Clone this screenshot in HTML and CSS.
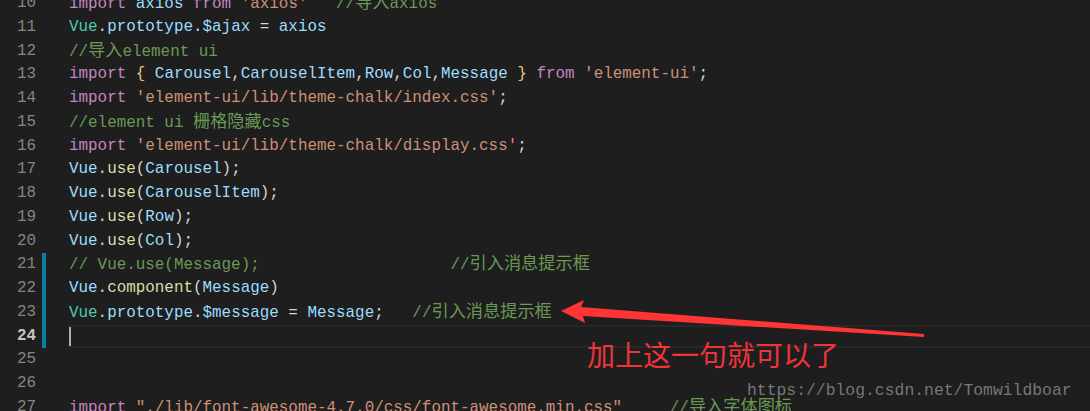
FILE: index.html
```html
<!DOCTYPE html>
<html lang="zh-CN">

<head>
  <meta charset="UTF-8">
  <title>main.js</title>
  <link rel="stylesheet" href="styles.css">
</head>

<body>
  <div class="editor">
    <div class="line"><span class="ln">10</span><span class="mark"></span><span class="code"><span class="kw">import</span> <span class="var">axios</span> <span class="kw">from</span> <span class="str">'axios'</span>   <span class="cm">//<span class="zh">导入</span>axios</span></span></div>
    <div class="line"><span class="ln">11</span><span class="mark"></span><span class="code"><span class="cls">Vue</span>.<span class="var">prototype</span>.<span class="var">$ajax</span> = <span class="var">axios</span></span></div>
    <div class="line"><span class="ln">12</span><span class="mark"></span><span class="code"><span class="cm">//<span class="zh">导入</span>element ui</span></span></div>
    <div class="line"><span class="ln">13</span><span class="mark"></span><span class="code"><span class="kw">import</span> <span class="br">{</span> <span class="var">Carousel</span>,<span class="var">CarouselItem</span>,<span class="var">Row</span>,<span class="var">Col</span>,<span class="var">Message</span> <span class="br">}</span> <span class="kw">from</span> <span class="str">'element-ui'</span>;</span></div>
    <div class="line"><span class="ln">14</span><span class="mark"></span><span class="code"><span class="kw">import</span> <span class="str">'element-ui/lib/theme-chalk/index.css'</span>;</span></div>
    <div class="line"><span class="ln">15</span><span class="mark"></span><span class="code"><span class="cm">//element ui <span class="zh">栅格隐藏</span>css</span></span></div>
    <div class="line"><span class="ln">16</span><span class="mark"></span><span class="code"><span class="kw">import</span> <span class="str">'element-ui/lib/theme-chalk/display.css'</span>;</span></div>
    <div class="line"><span class="ln">17</span><span class="mark"></span><span class="code"><span class="var">Vue</span>.<span class="fn">use</span>(<span class="var">Carousel</span>);</span></div>
    <div class="line"><span class="ln">18</span><span class="mark"></span><span class="code"><span class="var">Vue</span>.<span class="fn">use</span>(<span class="var">CarouselItem</span>);</span></div>
    <div class="line"><span class="ln">19</span><span class="mark"></span><span class="code"><span class="var">Vue</span>.<span class="fn">use</span>(<span class="var">Row</span>);</span></div>
    <div class="line"><span class="ln">20</span><span class="mark"></span><span class="code"><span class="var">Vue</span>.<span class="fn">use</span>(<span class="var">Col</span>);</span></div>
    <div class="line"><span class="ln">21</span><span class="mark on"></span><span class="code"><span class="cm">// Vue.use(Message);                    //<span class="zh">引入消息提示框</span></span></span></div>
    <div class="line"><span class="ln">22</span><span class="mark on"></span><span class="code"><span class="var">Vue</span>.<span class="fn">component</span>(<span class="var">Message</span>)</span></div>
    <div class="line"><span class="ln">23</span><span class="mark on"></span><span class="code"><span class="cls">Vue</span>.<span class="var">prototype</span>.<span class="var">$message</span> = <span class="var">Message</span>;   <span class="cm">//<span class="zh">引入消息提示框</span></span></span></div>
    <div class="line active"><span class="ln">24</span><span class="mark on"></span><span class="code"><span class="cursor"></span></span></div>
    <div class="line"><span class="ln">25</span><span class="mark"></span><span class="code"></span></div>
    <div class="line"><span class="ln">26</span><span class="mark"></span><span class="code"></span></div>
    <div class="line"><span class="ln">27</span><span class="mark"></span><span class="code"><span class="kw">import</span> <span class="str">"./lib/font-awesome-4.7.0/css/font-awesome.min.css"</span>     <span class="cm">//<span class="zh">导入字体图标</span></span></span></div>

    <!-- annotation drawn on top of the screenshot -->
    <svg class="arrow" width="1090" height="411" viewBox="0 0 1090 411">
      <polygon points="561,311 584,300 581,307 924,334 924,337 583,316 585,323" fill="#fd3535" />
    </svg>
    <div class="note">加上这一句就可以了</div>
    <div class="watermark">https://blog.csdn.net/Tomwildboar</div>
  </div>
</body>

</html>
```

FILE: styles.css
```css
html,
body {
  margin: 0;
  height: 100%;
  background: #1e1e1e;
  overflow: hidden;
}

.editor {
  position: relative;
  margin-top: -8px;
  font-family: "Liberation Mono", monospace;
  font-size: 15.9px;
  color: #d4d4d4;
}

.line {
  display: flex;
  height: 23.75px;
  line-height: 23.75px;
  white-space: pre;
}

.ln {
  width: 36px;
  text-align: right;
  color: #858585;
}

.mark {
  width: 4px;
  margin-left: 6px;
}

.mark.on {
  background: #0c7d9d;
}

.code {
  flex: 1;
  margin-left: 23px;
}

.active .ln {
  color: #c6c6c6;
  font-weight: bold;
}

.active .code {
  border-top: 2px solid #282828;
  border-bottom: 2px solid #282828;
  box-sizing: border-box;
  line-height: 19.75px;
}

.cursor {
  display: inline-block;
  width: 2px;
  height: 19px;
  vertical-align: top;
  background: #aeafad;
}

.kw {
  color: #c586c0;
}

.var {
  color: #9cdcfe;
}

.cls {
  color: #4ec9b0;
}

.fn {
  color: #dcdcaa;
}

.str {
  color: #ce9178;
}

.cm {
  color: #6a9955;
}

.br {
  color: #e5c07b;
}

.zh {
  font-family: "Noto Sans CJK SC", sans-serif;
  font-size: 17.2px;
  line-height: 1;
}

.arrow {
  position: absolute;
  left: 0;
  top: 8px;
}

.note {
  position: absolute;
  left: 587px;
  top: 345px;
  font-family: "Noto Sans CJK SC", sans-serif;
  font-size: 28px;
  line-height: 34px;
  color: #f0343a;
}

.watermark {
  position: absolute;
  left: 747px;
  top: 387px;
  font-family: "Liberation Mono", monospace;
  font-size: 16.4px;
  line-height: 24px;
  color: rgba(150, 150, 150, 0.75);
}
```
